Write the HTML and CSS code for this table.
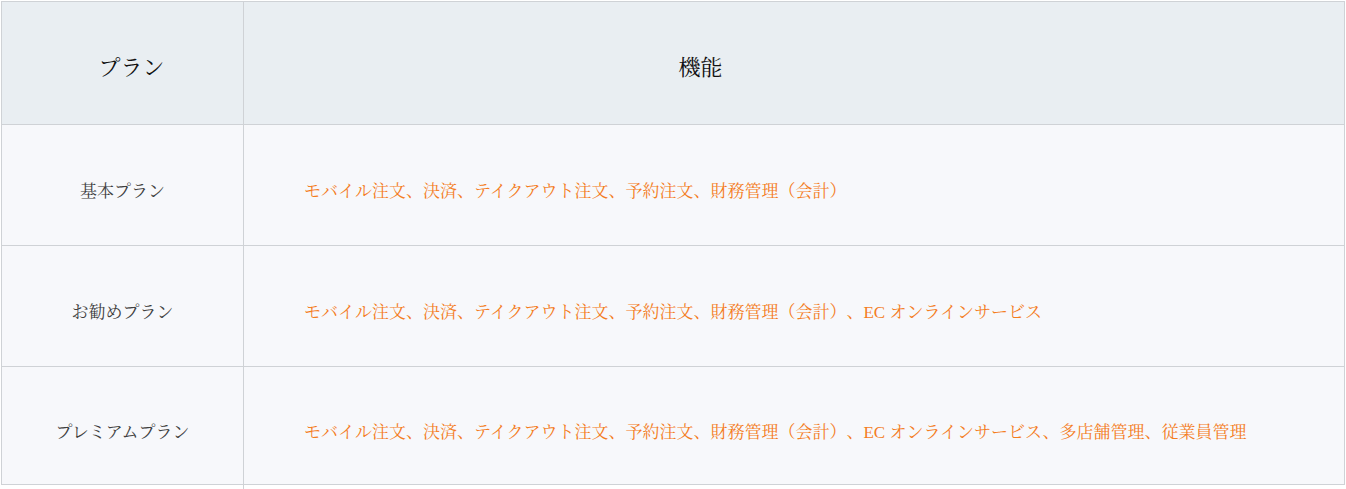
FILE: index.html
```html
<!DOCTYPE html>
<html lang="ja">
<head>
<meta charset="utf-8">
<title>プラン</title>
<link rel="stylesheet" href="styles.css">
</head>
<body>
<div class="wrap">
  <div class="plan-table">
    <div class="cell head head-plan">プラン</div>
    <div class="cell head head-feat">機能</div>

    <div class="cell name">基本プラン</div>
    <div class="cell feat">モバイル注文、決済、テイクアウト注文、予約注文、財務管理（会計）</div>

    <div class="cell name">お勧めプラン</div>
    <div class="cell feat">モバイル注文、決済、テイクアウト注文、予約注文、財務管理（会計）、EC オンラインサービス</div>

    <div class="cell name last">プレミアムプラン</div>
    <div class="cell feat last">モバイル注文、決済、テイクアウト注文、予約注文、財務管理（会計）、EC オンラインサービス、多店舗管理、従業員管理</div>
  </div>
  <div class="tail"></div>
</div>
</body>
</html>
```

FILE: styles.css
```css
html, body {
  margin: 0;
  padding: 0;
  background: #ffffff;
}

body {
  font-family: "Liberation Serif", "Noto Serif CJK JP", "IPAMincho", "IPAexMincho", "TakaoMincho", "AR PL UMing CN", "Noto Sans CJK JP", serif;
  text-spacing-trim: space-all;
  font-feature-settings: "palt" 0, "halt" 0;
}

.wrap {
  padding: 1px 1px 0 1px;
}

.plan-table {
  display: grid;
  grid-template-columns: 242px 1fr;
  grid-template-rows: 123px 121px 121px 118px;
  border-top: 1px solid #cfd2d6;
  border-left: 1px solid #cfd2d6;
}

.cell {
  box-sizing: border-box;
  border-right: 1px solid #cfd2d6;
  border-bottom: 1px solid #cfd2d6;
  display: flex;
  align-items: center;
  background: #f7f8fb;
  font-size: 17px;
  line-height: 24px;
}

.head {
  background: #e9eef2;
  color: #111111;
  font-size: 22px;
  padding-top: 9px;
}

.head-plan {
  justify-content: center;
  padding-left: 18px;
}

.head-feat {
  justify-content: center;
  padding-right: 187px;
}

.name {
  justify-content: center;
  color: #3f3f3f;
  padding-top: 14px;
}

.feat {
  color: #f47d1e;
  padding-left: 60px;
  padding-top: 14px;
}

.last {
  align-items: flex-start;
  padding-top: 54px;
}

.tail {
  width: 243px;
  height: 6px;
  box-sizing: border-box;
  border-right: 1px solid #cfd2d6;
}
```
